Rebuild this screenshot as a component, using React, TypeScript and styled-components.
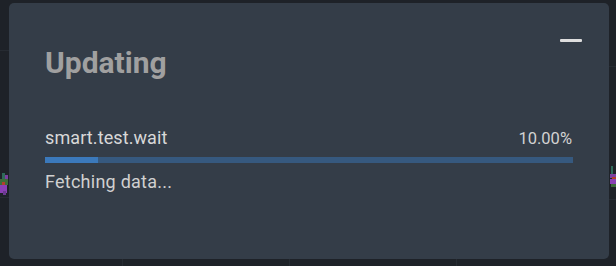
import React from "react";
import styled, { createGlobalStyle } from "styled-components";

const GlobalStyle = createGlobalStyle`
  html, body {
    margin: 0;
    padding: 0;
    background: #1e2228;
    font-family: Roboto, "Liberation Sans", sans-serif;
  }
`;

const Backdrop = styled.div`
  position: relative;
  width: 616px;
  height: 266px;
  overflow: hidden;
  background:
    linear-gradient(#262b32, #262b32) 0 50px / 9px 1px no-repeat,
    linear-gradient(#262b32, #262b32) 609px 66px / 7px 1px no-repeat,
    linear-gradient(#262b32, #262b32) 0 197px / 9px 1px no-repeat,
    linear-gradient(#262b32, #262b32) 609px 199px / 7px 1px no-repeat,
    linear-gradient(#262b32, #262b32) 122px 259px / 1px 7px no-repeat,
    linear-gradient(#262b32, #262b32) 289px 259px / 1px 7px no-repeat,
    linear-gradient(#262b32, #262b32) 456px 259px / 1px 7px no-repeat,
    #1e2228;
`;

const Sprite = styled.svg<{ $left: number; $top: number }>`
  position: absolute;
  left: ${(p) => p.$left}px;
  top: ${(p) => p.$top}px;
`;

const Modal = styled.section`
  position: absolute;
  left: 9px;
  top: 3px;
  width: 600px;
  height: 256px;
  box-sizing: border-box;
  padding: 42px 36px 0 36px;
  background: #343d48;
  border-radius: 5px;
  display: flex;
  flex-direction: column;
`;

const Header = styled.header`
  display: flex;
  justify-content: space-between;
  align-items: flex-start;
`;

const Title = styled.h2`
  margin: 0;
  font-size: 30px;
  line-height: 35px;
  font-weight: 700;
  color: #a0a0a0;
`;

const MinimizeButton = styled.button`
  margin: -6px -9px 0 0;
  width: 22px;
  height: 3px;
  padding: 0;
  border: none;
  border-radius: 1px;
  background: #dedede;
  cursor: pointer;
`;

const TaskRow = styled.div`
  margin-top: 47px;
  display: flex;
  justify-content: space-between;
  align-items: baseline;
`;

const TaskName = styled.span`
  font-size: 18px;
  line-height: 21px;
  letter-spacing: 0.1px;
  color: #d8d8d8;
`;

const Percent = styled.span`
  padding-right: 1px;
  font-size: 16.5px;
  color: #d2d2d2;
`;

const Track = styled.div`
  margin-top: 9px;
  height: 6px;
  background: #36597f;
`;

const Fill = styled.div`
  height: 100%;
  background: #3b79bb;
`;

const Status = styled.p`
  margin: 8px 0 0;
  font-size: 18px;
  line-height: 21px;
  letter-spacing: 0.25px;
  color: #d0d0d0;
`;

const progress = 10;

export default function App() {
  return (
    <>
      <GlobalStyle />
      <Backdrop>
        <Sprite $left={0} $top={173} width="9" height="22" viewBox="0 0 9 22">
          <rect x="2" y="0" width="3" height="8" fill="#2f6a5a" />
          <rect x="5" y="2" width="3" height="5" fill="#7b3fa0" />
          <rect x="0" y="6" width="8" height="6" fill="#3d6b3a" />
          <rect x="2" y="9" width="3" height="3" fill="#b0402a" />
          <rect x="0" y="12" width="7" height="8" fill="#8a3fb5" />
          <rect x="3" y="18" width="3" height="4" fill="#6b3a8f" />
        </Sprite>
        <Sprite $left={610} $top={166} width="6" height="22" viewBox="0 0 6 22">
          <rect x="1" y="0" width="2" height="9" fill="#2f6a5a" />
          <rect x="0" y="8" width="6" height="4" fill="#7b3fa0" />
          <rect x="2" y="11" width="4" height="2" fill="#b0402a" />
          <rect x="0" y="13" width="6" height="5" fill="#8a3fb5" />
          <rect x="1" y="18" width="5" height="3" fill="#3d6b3a" />
        </Sprite>
        <Modal>
          <Header>
            <Title>Updating</Title>
            <MinimizeButton aria-label="Minimize" />
          </Header>
          <TaskRow>
            <TaskName>smart.test.wait</TaskName>
            <Percent>{progress.toFixed(2)}%</Percent>
          </TaskRow>
          <Track>
            <Fill style={{ width: `${progress}%` }} />
          </Track>
          <Status>Fetching data...</Status>
        </Modal>
      </Backdrop>
    </>
  );
}
